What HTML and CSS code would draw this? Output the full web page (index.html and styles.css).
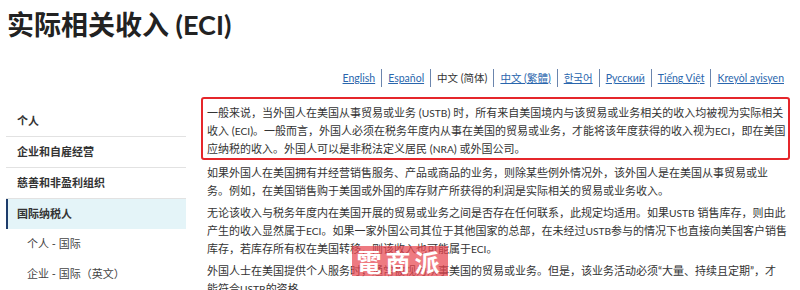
FILE: index.html
```html
<!DOCTYPE html>
<html lang="zh-CN">
<head>
    <meta charset="UTF-8">
    <meta name="viewport" content="width=device-width, initial-scale=1.0">
    <title>实际相关收入 (ECI)</title>
    <link rel="stylesheet" href="styles.css">
</head>
<body>
    <div class="page">
        <h1 class="title">实际相关收入 (ECI)</h1>

        <ul class="languages">
            <li><a href="#">English</a></li>
            <li><a href="#">Español</a></li>
            <li class="current">中文 (简体)</li>
            <li><a href="#">中文 (繁體)</a></li>
            <li><a href="#" lang="ko">한국어</a></li>
            <li><a href="#">Русский</a></li>
            <li><a href="#">Tiếng Việt</a></li>
            <li><a href="#">Kreyòl ayisyen</a></li>
        </ul>

        <div class="columns">
            <ul class="sidebar">
                <li class="nav-item">个人</li>
                <li class="nav-item">企业和自雇经营</li>
                <li class="nav-item">慈善和非盈利组织</li>
                <li class="nav-item active">国际纳税人</li>
                <li class="nav-sub">个人 - 国际</li>
                <li class="nav-sub">企业 - 国际（英文）</li>
            </ul>

            <div class="content">
                <div class="highlight">
                    <p>一般来说，当外国人在美国从事贸易或业务 (<abbr>USTB</abbr>) 时，所有来自美国境内与该贸易或业务相关的收入均被视为实际相关收入 (<abbr>ECI</abbr>)。一般而言，外国人必须在税务年度内从事在美国的贸易或业务，才能将该年度获得的收入视为<abbr>ECI</abbr>，即在美国应纳税的收入。外国人可以是非税法定义居民 (<abbr>NRA</abbr>) 或外国公司。</p>
                </div>
                <p>如果外国人在美国拥有并经营销售服务、产品或商品的业务，则除某些例外情况外，该外国人是在美国从事贸易或业务。例如，在美国销售购于美国或外国的库存财产所获得的利润是实际相关的贸易或业务收入。</p>
                <p>无论该收入与税务年度内在美国开展的贸易或业务之间是否存在任何联系，此规定均适用。如果<abbr>USTB</abbr> 销售库存，则由此产生的收入显然属于<abbr>ECI</abbr>。如果一家外国公司其位于其他国家的总部，在未经过<abbr>USTB</abbr>参与的情况下也直接向美国客户销售库存，若库存所有权在美国转移，则该收入也可能属于<abbr>ECI</abbr>。</p>
                <p>外国人士在美国提供个人服务时，通常被视为从事美国的贸易或业务。但是，该业务活动必须“大量、持续且定期”，才能符合<abbr>USTB</abbr>的资格。</p>
            </div>
        </div>

        <div class="watermark" lang="zh-TW">電商派</div>
    </div>
</body>
</html>
```

FILE: styles.css
```css
body {
    margin: 0;
    background-color: #fff;
    color: #333;
    font-family: "Lato", "Noto Sans CJK SC", sans-serif;
    font-size: 11px;
    overflow: hidden;
}

.page {
    position: relative;
    padding: 0 10px 0 6px;
}

.title {
    margin: 0;
    padding: 8px 0 0 1px;
    font-size: 27px;
    line-height: 34px;
    font-weight: 700;
    color: #222;
}

.languages {
    list-style: none;
    margin: 27px 6px 0 0;
    padding: 0;
    display: flex;
    justify-content: flex-end;
    font-size: 10.5px;
    line-height: 18px;
}

.languages li {
    padding: 0 6px;
    border-left: 1px solid #6b85ad;
}

.languages li:first-child {
    border-left: none;
}

.languages li:last-child {
    padding-right: 0;
}

.languages a {
    color: #2a66ad;
    text-decoration: underline;
}

.languages .current {
    color: #333;
}

.columns {
    display: flex;
    gap: 15px;
    margin-top: 10px;
}

.sidebar {
    list-style: none;
    margin: 0;
    padding: 9px 0 0;
    width: 180px;
    flex-shrink: 0;
}

.nav-item {
    height: 30px;
    line-height: 30px;
    padding-left: 11px;
    font-weight: 700;
    color: #333;
    border-bottom: 1px solid #e2e2e2;
}

.nav-item.active {
    height: 30px;
    border-bottom: none;
    border-left: 2px solid #1d3c6b;
    padding-left: 9px;
    background-color: #e4f4f8;
}

.nav-sub {
    height: 30px;
    line-height: 30px;
    padding-left: 21px;
    color: #444;
}

.content {
    flex: 1;
    padding: 0 3px 0 6px;
}

.content p {
    margin: 0 0 4px;
    line-height: 18px;
}

.content abbr {
    text-decoration: none;
    font-size: 10.2px;
}

/* red annotation frame around the first paragraph */
.highlight {
    border: 2px solid #e5262b;
    border-radius: 3px;
    padding: 5px 1px 0 4px;
    margin: 0 -3px 4px -6px;
}

.highlight p {
    margin: 0;
}

.watermark {
    position: absolute;
    left: 352px;
    top: 246px;
    width: 96px;
    height: 30px;
    background-color: rgba(232, 70, 80, 0.72);
    color: #fff;
    font-family: "Noto Sans CJK TC", sans-serif;
    font-size: 25px;
    font-weight: 700;
    line-height: 30px;
    text-align: center;
    letter-spacing: 4px;
}
```
